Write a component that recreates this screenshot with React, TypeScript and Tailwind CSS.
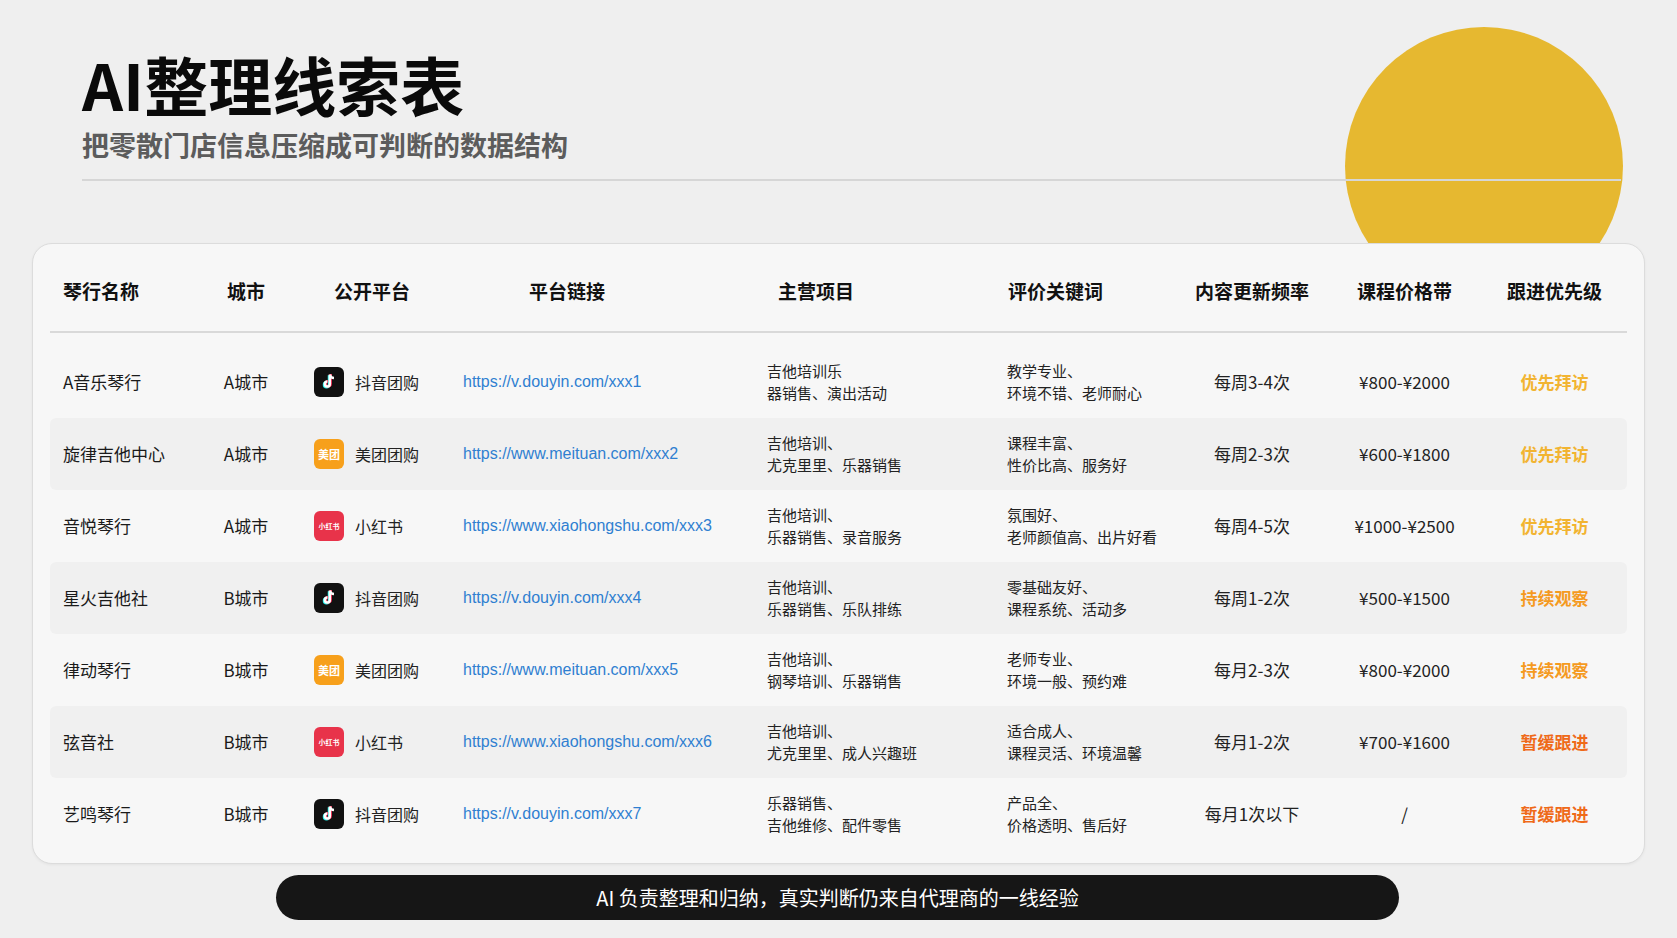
import React from "react";

const rows = [
  ["A音乐琴行", "A城市", "dy", "https://v.douyin.com/xxx1", "吉他培训乐", "器销售、演出活动", "教学专业、", "环境不错、老师耐心", "每周3-4次", "¥800-¥2000", "优先拜访"],
  ["旋律吉他中心", "A城市", "mt", "https://www.meituan.com/xxx2", "吉他培训、", "尤克里里、乐器销售", "课程丰富、", "性价比高、服务好", "每周2-3次", "¥600-¥1800", "优先拜访"],
  ["音悦琴行", "A城市", "xhs", "https://www.xiaohongshu.com/xxx3", "吉他培训、", "乐器销售、录音服务", "氛围好、", "老师颜值高、出片好看", "每周4-5次", "¥1000-¥2500", "优先拜访"],
  ["星火吉他社", "B城市", "dy", "https://v.douyin.com/xxx4", "吉他培训、", "乐器销售、乐队排练", "零基础友好、", "课程系统、活动多", "每周1-2次", "¥500-¥1500", "持续观察"],
  ["律动琴行", "B城市", "mt", "https://www.meituan.com/xxx5", "吉他培训、", "钢琴培训、乐器销售", "老师专业、", "环境一般、预约难", "每月2-3次", "¥800-¥2000", "持续观察"],
  ["弦音社", "B城市", "xhs", "https://www.xiaohongshu.com/xxx6", "吉他培训、", "尤克里里、成人兴趣班", "适合成人、", "课程灵活、环境温馨", "每月1-2次", "¥700-¥1600", "暂缓跟进"],
  ["艺鸣琴行", "B城市", "dy", "https://v.douyin.com/xxx7", "乐器销售、", "吉他维修、配件零售", "产品全、", "价格透明、售后好", "每月1次以下", "/", "暂缓跟进"],
];

const prioColor: Record<string, string> = {
  优先拜访: "text-[#f2b431]",
  持续观察: "text-[#f59a1f]",
  暂缓跟进: "text-[#ef6a19]",
};

function PlatformIcon({ p }: { p: string }) {
  if (p === "dy")
    return (
      <div className="w-[30px] h-[30px] rounded-[6px] bg-[#111] flex items-center justify-center">
        <svg width="20" height="20" viewBox="0 0 24 24">
          <path d="M13 3v11.5a3 3 0 1 1-3-3" fill="none" stroke="#25f4ee" strokeWidth="3" transform="translate(-1,0.8)" />
          <path d="M13 3v11.5a3 3 0 1 1-3-3" fill="none" stroke="#fe2c55" strokeWidth="3" transform="translate(1,-0.5)" />
          <path d="M13 3v11.5a3 3 0 1 1-3-3M13 3c0.5 2.5 2.5 4.2 5 4.3" fill="none" stroke="#fff" strokeWidth="3" />
        </svg>
      </div>
    );
  if (p === "mt")
    return (
      <div className="w-[30px] h-[30px] rounded-[6px] bg-[#f7a01b] flex items-center justify-center text-white text-[11px] font-bold leading-none">
        美团
      </div>
    );
  return (
    <div className="w-[30px] h-[30px] rounded-[6px] bg-[#e8334a] flex items-center justify-center text-white text-[7px] font-bold leading-none">
      小红书
    </div>
  );
}

const platName: Record<string, string> = { dy: "抖音团购", mt: "美团团购", xhs: "小红书" };

export default function App() {
  const font = { fontFamily: '"Noto Sans CJK SC", "Noto Sans", sans-serif' };
  return (
    <div className="relative w-[1677px] h-[938px] overflow-hidden bg-[#efefef]" style={font}>
      <div className="absolute left-[1345px] top-[27px] w-[278px] h-[278px] rounded-full bg-[#e6b830]" />
      <div className="relative pl-[82px] pt-[45px] pr-[56px]">
        <h1 className="text-[64px] font-bold leading-[76px] text-[#0a0a0a]">AI整理线索表</h1>
        <p className="mt-[6px] text-[27px] font-bold leading-[36px] text-[#5c5c5c]">把零散门店信息压缩成可判断的数据结构</p>
        <div className="mt-[16px] h-[2px] bg-[#d6d6d6] mr-[0px] w-[1539px]" />
      </div>
      <div className="relative ml-[32px] mt-[62px] w-[1613px] rounded-[20px] border border-[#dcdcdc] bg-[#f7f7f7] px-[17px] pb-[13px] shadow-[0_1px_3px_rgba(0,0,0,0.05)]">
        <div className="flex h-[89px] items-center pt-[8px] border-b-2 border-[#d9d9d9] text-[19px] font-bold text-[#111]">
          <div className="w-[150px] pl-[13px]">琴行名称</div>
          <div className="w-[92px] text-center">城市</div>
          <div className="w-[160px] text-center">公开平台</div>
          <div className="w-[295px] pl-[77px]">平台链接</div>
          <div className="w-[240px] pl-[31px]">主营项目</div>
          <div className="w-[190px] pl-[21px]">评价关键词</div>
          <div className="w-[150px] text-center">内容更新频率</div>
          <div className="w-[155px] text-center">课程价格带</div>
          <div className="w-[145px] text-center">跟进优先级</div>
        </div>
        <div className="pt-[13px]">
          {rows.map((r, i) => (
            <div key={i} className={`flex h-[72px] items-center rounded-[6px] ${i % 2 === 1 ? "bg-[#f0f0f0]" : ""}`}>
              <div className="w-[150px] pl-[13px] text-[17px] text-[#1a1a1a]">{r[0]}</div>
              <div className="w-[92px] text-center text-[17px] text-[#1a1a1a]">{r[1]}</div>
              <div className="w-[160px] pl-[22px] flex items-center gap-[11px]">
                <PlatformIcon p={r[2]} />
                <span className="text-[16px] text-[#222]">{platName[r[2]]}</span>
              </div>
              <div className="w-[295px] pl-[11px] text-[16px] text-[#2f7fd1]" style={{ fontFamily: '"Liberation Sans", Arial, sans-serif' }}>{r[3]}</div>
              <div className="w-[240px] pl-[20px] text-[15px] leading-[22px] text-[#222]">
                <div>{r[4]}</div>
                <div>{r[5]}</div>
              </div>
              <div className="w-[190px] pl-[20px] text-[15px] leading-[22px] text-[#222] whitespace-nowrap">
                <div>{r[6]}</div>
                <div>{r[7]}</div>
              </div>
              <div className="w-[150px] text-center text-[17px] text-[#222]">{r[8]}</div>
              <div className="w-[155px] text-center text-[17px] text-[#222]">{r[9]}</div>
              <div className={`w-[145px] text-center text-[17px] font-bold ${prioColor[r[10]]}`}>{r[10]}</div>
            </div>
          ))}
        </div>
      </div>
      <div className="ml-[276px] mt-[11px] w-[1123px] h-[45px] rounded-full bg-[#161616] flex items-center justify-center text-white text-[20px]">
        AI 负责整理和归纳，真实判断仍来自代理商的一线经验
      </div>
    </div>
  );
}
